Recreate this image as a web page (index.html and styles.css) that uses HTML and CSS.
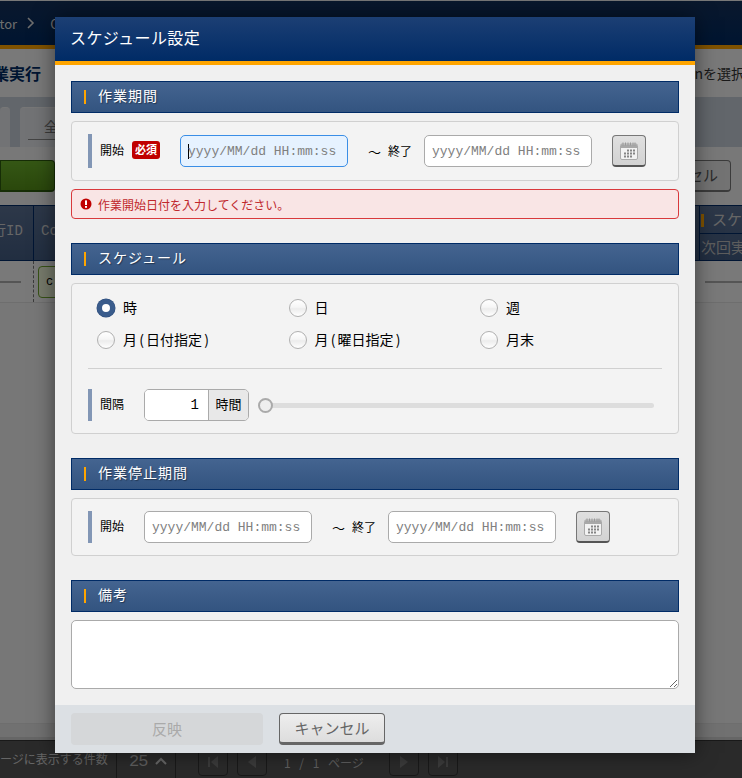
FILE: index.html
```html
<!DOCTYPE html>
<html lang="ja">
<head>
<meta charset="utf-8">
<title>スケジュール設定</title>
<link rel="stylesheet" href="styles.css">
</head>
<body>
<div class="page">
  <header class="top">
    <span class="crumb crumb-first">Conductor</span>
    <svg class="crumb-chev" width="8" height="12" viewBox="0 0 8 12"><path d="M1 1l5 5-5 5" fill="none" stroke="#ddd" stroke-width="1.6"/></svg>
    <span class="crumb">Conductor</span>
  </header>
  <div class="title-row">
    <h1 class="page-title">作業実行</h1>
    <p class="page-hint">Operationを選択</p>
  </div>
  <div class="tab-band">
    <div class="tab tab-a"></div>
    <div class="tab tab-b"><span class="tab-text">全</span></div>
  </div>
  <div class="action-row">
    <div class="btn-green"></div>
    <div class="btn-cancel-bg">キャンセル</div>
  </div>
  <div class="table-head">
    <div class="th th-id">実行ID</div>
    <div class="th th-name">Conductor</div>
    <div class="th-right">
      <div class="th-right-top">スケジュール</div>
      <div class="th-right-bottom">次回実行</div>
    </div>
  </div>
  <div class="table-row">
    <div class="td td-id"><span class="dash"></span></div>
    <div class="td td-name"><span class="chip">c</span></div>
    <div class="td-right"><span class="dash"></span></div>
  </div>
  <div class="page-fill"></div>
  <div class="page-strip"></div>
  <footer class="pager">
    <span class="pager-label">ージに表示する件数</span>
    <span class="pager-size">
      <span class="pager-count">25</span>
      <svg width="12" height="8" viewBox="0 0 12 8"><path d="M1 7l5-5 5 5" fill="none" stroke="#ccc" stroke-width="2"/></svg>
    </span>
    <span class="pager-btn pager-btn-first"><svg width="12" height="12" viewBox="0 0 12 12"><path d="M1 1h2v10H1zM11 0v12L4 6z" fill="#777"/></svg></span>
    <span class="pager-btn"><svg width="12" height="12" viewBox="0 0 12 12"><path d="M10 0v12L2 6z" fill="#777"/></svg></span>
    <span class="pager-pages">1 / 1 ページ</span>
    <span class="pager-btn"><svg width="12" height="12" viewBox="0 0 12 12"><path d="M2 0v12l8-6z" fill="#777"/></svg></span>
    <span class="pager-btn"><svg width="12" height="12" viewBox="0 0 12 12"><path d="M1 0v12l7-6zM9 1h2v10H9z" fill="#777"/></svg></span>
  </footer>
</div>
<div class="overlay"></div>
<section class="modal">
  <h2 class="modal-title">スケジュール設定</h2>
  <div class="modal-body">
    <div class="group">
      <h3 class="heading">作業期間</h3>
      <div class="panel panel-date">
        <div class="field-label field-label-wide"><span>開始</span><span class="badge">必須</span></div>
        <input class="date-input is-focus" type="text" placeholder="yyyy/MM/dd HH:mm:ss">
        <span class="tilde">～</span><span class="end-label">終了</span>
        <input class="date-input" type="text" placeholder="yyyy/MM/dd HH:mm:ss">
        <button class="cal-btn" type="button">
          <svg width="20" height="20" viewBox="0 0 20 20"><rect x="1.5" y="3" width="17" height="15.5" rx="1.5" fill="#f2f2f2" stroke="#aaa"/><rect x="2" y="3.5" width="16" height="3.5" fill="#a8a8a8"/><path d="M4 1.5v3M6.5 1.5v3M9 1.5v3M11.5 1.5v3M14 1.5v3M16 1.5v3" stroke="#999"/><path d="M8 8.5h2v2H8zM11 8.5h2v2h-2zM14 8.5h2v2h-2zM5 11.5h2v2H5zM8 11.5h2v2H8zM11 11.5h2v2h-2zM14 11.5h2v2h-2zM5 14.5h2v2H5zM8 14.5h2v2H8zM11 14.5h2v2h-2z" fill="#858585"/></svg>
        </button>
      </div>
      <div class="alert">
        <svg class="alert-icon" width="12" height="12" viewBox="0 0 12 12"><circle cx="6" cy="6" r="5.5" fill="#c00000"/><rect x="5" y="2.4" width="2" height="4.6" fill="#fff"/><rect x="5" y="8" width="2" height="1.8" fill="#fff"/></svg>
        <span>作業開始日付を入力してください。</span>
      </div>
    </div>

    <div class="group">
      <h3 class="heading">スケジュール</h3>
      <div class="panel panel-schedule">
        <div class="radios">
          <label class="radio-item"><span class="radio is-on"></span><span class="radio-text">時</span></label>
          <label class="radio-item"><span class="radio"></span><span class="radio-text">日</span></label>
          <label class="radio-item"><span class="radio"></span><span class="radio-text">週</span></label>
          <label class="radio-item"><span class="radio"></span><span class="radio-text">月<span class="paren">(</span>日付指定<span class="paren">)</span></span></label>
          <label class="radio-item"><span class="radio"></span><span class="radio-text">月<span class="paren">(</span>曜日指定<span class="paren">)</span></span></label>
          <label class="radio-item"><span class="radio"></span><span class="radio-text">月末</span></label>
        </div>
        <hr class="divider">
        <div class="interval">
          <div class="field-label"><span>間隔</span></div>
          <div class="number-group">
            <input class="number-input" type="text" value="1">
            <span class="number-unit">時間</span>
          </div>
          <div class="slider"><span class="slider-thumb"></span><span class="slider-track"></span></div>
        </div>
      </div>
    </div>

    <div class="group">
      <h3 class="heading">作業停止期間</h3>
      <div class="panel panel-stop">
        <div class="field-label"><span>開始</span></div>
        <input class="date-input" type="text" placeholder="yyyy/MM/dd HH:mm:ss">
        <span class="tilde">～</span><span class="end-label">終了</span>
        <input class="date-input" type="text" placeholder="yyyy/MM/dd HH:mm:ss">
        <button class="cal-btn" type="button">
          <svg width="20" height="20" viewBox="0 0 20 20"><rect x="1.5" y="3" width="17" height="15.5" rx="1.5" fill="#f2f2f2" stroke="#aaa"/><rect x="2" y="3.5" width="16" height="3.5" fill="#a8a8a8"/><path d="M4 1.5v3M6.5 1.5v3M9 1.5v3M11.5 1.5v3M14 1.5v3M16 1.5v3" stroke="#999"/><path d="M8 8.5h2v2H8zM11 8.5h2v2h-2zM14 8.5h2v2h-2zM5 11.5h2v2H5zM8 11.5h2v2H8zM11 11.5h2v2h-2zM14 11.5h2v2h-2zM5 14.5h2v2H5zM8 14.5h2v2H8zM11 14.5h2v2h-2z" fill="#858585"/></svg>
        </button>
      </div>
    </div>

    <div class="group">
      <h3 class="heading">備考</h3>
      <textarea class="note"></textarea>
    </div>
  </div>
  <div class="modal-foot">
    <button class="btn-apply" type="button" disabled>反映</button>
    <button class="btn-cancel" type="button">キャンセル</button>
  </div>
</section>
</body>
</html>
```

FILE: styles.css
```css
* { box-sizing: border-box; }
html, body { margin: 0; padding: 0; }
body {
  position: relative;
  width: 742px;
  height: 778px;
  overflow: hidden;
  font-family: "Noto Sans CJK JP", "Liberation Sans", sans-serif;
  color: #000;
  background: #eee;
}
h1, h2, h3, p { margin: 0; font-weight: normal; }

/* background page */
.page { display: flex; flex-direction: column; height: 778px; border-top: 1px solid #f0f0f0; overflow: hidden; }
.top {
  height: 48px;
  flex: none;
  display: flex;
  align-items: center;
  background: linear-gradient(#14305a, #002a62);
  border-bottom: 4px solid #ffa500;
  color: #ddd;
  font-size: 13px;
  white-space: nowrap;
}
.crumb-first { margin-left: -47px; }
.crumb-chev { margin: 0 15px 0 10px; flex: none; }
.title-row {
  height: 48px;
  flex: none;
  display: flex;
  align-items: center;
  justify-content: space-between;
  background: #f2f2f2;
  white-space: nowrap;
}
.page-title { margin-left: -23px; font-size: 16px; font-weight: 700; color: #002b62; }
.page-hint { font-size: 14px; color: #333; margin-right: -3px; }
.tab-band {
  height: 50px;
  flex: none;
  display: flex;
  align-items: flex-end;
  gap: 10px;
  padding-top: 10px;
  background: #c5ccd6;
}
.tab { height: 40px; background: #e4e6ea; border-radius: 4px 4px 0 0; border-top: 1px solid #eee; }
.tab-a { width: 10px; }
.tab-b { width: 120px; padding: 8px 0 0 24px; font-size: 14px; color: #777; }
.tab-text { display: block; width: 80px; height: 24px; border-bottom: 1px solid #888; margin-left: -16px; padding-left: 16px; }
.action-row {
  height: 58px;
  flex: none;
  display: flex;
  align-items: center;
  justify-content: space-between;
  background: #f0f0f0;
  padding-right: 11px;
}
.btn-green { width: 55px; height: 32px; background: linear-gradient(#6aae2a, #558f18); border: 1px solid #2c5a0c; border-bottom-width: 2px; border-radius: 0 4px 4px 0; }
.btn-cancel-bg {
  width: 110px; height: 32px; line-height: 28px; text-align: right; padding-right: 12px;
  border: 1px solid #777; border-bottom-width: 2px; border-radius: 4px;
  background: #e6e6e6; color: #555; font-size: 15px;
}
.table-head {
  height: 56px;
  flex: none;
  display: flex;
  background: linear-gradient(#5a7092, #435c82);
  border-top: 1px solid #002b66;
  border-bottom: 1px solid #002b66;
  color: #ccc;
  white-space: nowrap;
  overflow: hidden;
}
.th { font: 14px/50px "Liberation Mono", "Noto Sans CJK JP", monospace; border-right: 1px solid #002b66; overflow: hidden; }
.th-id { width: 34px; text-indent: -22px; }
.th-name { flex: 1; padding-left: 7px; }
.th-right { width: 42px; font-size: 15px; overflow: hidden; }
.th-right-top { position: relative; height: 28px; line-height: 25px; padding-left: 12px; border-bottom: 1px solid #002b66; white-space: nowrap; }
.th-right-top::before { content: ""; position: absolute; left: 1px; top: 8px; width: 3px; height: 13px; background: #ffa500; }
.th-right-bottom { line-height: 25px; padding-left: 1px; color: #bbb; }
.table-row {
  height: 42px;
  flex: none;
  display: flex;
  align-items: stretch;
  background: #f2f2f2;
  border-bottom: 1px solid #ddd;
}
.td { display: flex; align-items: center; }
.td-id { width: 34px; border-right: 1px dashed #777; }
.td-id .dash { width: 21px; }
.dash { display: block; height: 2px; background: #aaa; }
.td-name { flex: 1; padding-left: 4px; }
.chip {
  display: block; width: 40px; height: 32px; padding-left: 7px;
  font: 12px/30px "Liberation Mono", monospace;
  border: 1px solid #6ea52c; border-radius: 4px; background: #eef6d8;
}
.td-right { width: 37px; display: flex; align-items: center; }
.td-right .dash { width: 37px; }
.page-fill { flex: 1; background: #eee; }
.page-strip { height: 17px; flex: none; background: #e2e2e2; border-bottom: 3px solid #ccc; border-top: 1px solid #ddd; }
.pager {
  height: 38px;
  flex: none;
  display: flex;
  align-items: center;
  background: #555;
  border-top: 1px solid #333;
  color: #ddd;
  white-space: nowrap;
}
.pager-label { width: 117px; height: 100%; padding-top: 9px; line-height: 18px; font-size: 12px; border-right: 1px solid #333; color: #ccc; }
.pager-size { width: 59px; height: 100%; flex: none; display: flex; align-items: center; padding: 3px 0 0 12px; border-right: 1px solid #333; }
.pager-count { width: 26px; font: 17px "Liberation Mono", monospace; color: #bbb; letter-spacing: -1px; }
.pager-btn { width: 30px; height: 32px; margin-left: 9px; flex: none; display: flex; align-items: center; justify-content: center; padding-top: 5px; border: 1px solid #333; border-radius: 4px; }
.pager-btn-first { margin-left: 22px; }
.pager-pages { width: 113px; padding: 6px 0 0 17px; font-size: 12px; color: #bbb; word-spacing: 6px; }
.overlay { position: absolute; inset: 0; background: rgba(0, 0, 0, 0.5); }

/* modal */
.modal {
  position: absolute;
  left: 55px;
  top: 17px;
  width: 640px;
  height: 736px;
  display: flex;
  flex-direction: column;
  background: #f0f0f0;
  box-shadow: 0 0 20px rgba(0, 0, 0, 0.5);
}
.modal-title {
  height: 48px;
  flex: none;
  padding: 0 15px;
  line-height: 40px;
  font-size: 16px;
  letter-spacing: 0.4px;
  color: #fff;
  background: linear-gradient(#1c3f74, #002b66);
  border-bottom: 4px solid #ffa500;
}
.modal-body { flex: 1; display: flex; flex-direction: column; gap: 24px; padding: 16px; }
.group { display: flex; flex-direction: column; gap: 8px; }
.heading {
  height: 32px;
  flex: none;
  padding-left: 26px;
  line-height: 26px;
  font-size: 14px;
  letter-spacing: 1px;
  color: #fff;
  position: relative;
  text-shadow: 1px 1px 1px rgba(0, 0, 0, 0.4);
  background: linear-gradient(#446490, #335480);
  border: 1px solid #002b66;
}
.heading::before {
  content: "";
  position: absolute;
  left: 12px;
  top: 8px;
  width: 2px;
  height: 14px;
  background: #ffa500;
}
.panel { background: #f3f3f3; border: 1px solid #d0d0d0; border-radius: 4px; }
.panel-date, .panel-stop { display: flex; align-items: center; padding: 12px 16px; }
.panel-date { height: 60px; }
.panel-stop { height: 58px; }
.field-label {
  width: 56px;
  height: 32px;
  flex: none;
  display: flex;
  align-items: center;
  gap: 8px;
  padding: 0 0 3px 8px;
  font-size: 12px;
  border-left: 4px solid #8296b5;
}
.field-label-wide { width: 92px; height: 34px; }
.badge {
  width: 28px;
  height: 18px;
  line-height: 17px;
  text-align: center;
  border-radius: 3px;
  background: #c00000;
  color: #fff;
  font-size: 11px;
  font-weight: 700;
}
.date-input {
  width: 168px;
  height: 32px;
  flex: none;
  padding: 0 7px;
  font: 13px "Liberation Mono", monospace;
  background: #fff;
  border: 1px solid #aaa;
  border-radius: 5px;
  outline: none;
}
.date-input::placeholder { color: #808080; opacity: 1; }
.is-focus {
  background: linear-gradient(#000, #000) 7px center / 1px 15px no-repeat, #e6f2ff;
  border-color: #3a8ee6;
}
.tilde { margin-left: 20px; width: 13px; font-size: 13px; line-height: 1; }
.end-label { margin: 0 12px 2px 7px; font-size: 12px; }
.cal-btn {
  width: 34px;
  height: 32px;
  flex: none;
  margin-left: 20px;
  padding: 0;
  display: flex;
  align-items: center;
  justify-content: center;
  background: linear-gradient(#e0e0e0, #d2d2d2);
  border: 1px solid #777;
  border-bottom: 2px solid #555;
  border-radius: 4px;
}
.alert {
  height: 30px;
  display: flex;
  align-items: center;
  gap: 6px;
  padding-left: 8px;
  background: #f9e5e5;
  border: 1px solid #d9393c;
  border-radius: 4px;
  color: #c0282c;
  font-size: 12px;
}
.alert-icon { flex: none; }
.panel-schedule { height: 151px; padding: 15px 16px 12px; }
.radios { display: grid; grid-template-columns: repeat(3, 191.5px); row-gap: 14px; padding-left: 9px; }
.radio-item { display: flex; align-items: center; height: 18px; gap: 8px; font-size: 14px; line-height: 18px; white-space: nowrap; }
.radio-text { margin-top: -2px; }
.paren { display: inline-block; width: 9px; text-align: center; }
.radio {
  width: 18px;
  height: 18px;
  flex: none;
  border-radius: 50%;
  border: 1.5px solid #b0b0b0;
  background: linear-gradient(#fff, #f6f6f6 45%, #ececec 55%, #fff);
}
.radio.is-on {
  border: 5px solid #3a5c8c;
  background: #fff;
  box-shadow: 0 0 0 0.5px #2c4c7c;
}
.divider { height: 1px; margin: 19px 0 20px; border: 0; background: #d0d0d0; }
.interval { display: flex; align-items: center; height: 32px; }
.number-group { width: 105px; height: 32px; flex: none; display: flex; border: 1px solid #aaa; border-radius: 5px; overflow: hidden; }
.number-input { width: 63px; height: 30px; padding: 0 9px; border: 0; outline: 0; text-align: right; background: #fff; font: 14px "Liberation Mono", monospace; }
.number-unit { flex: 1; line-height: 28px; text-align: center; background: #e8e8e8; border-left: 1px solid #aaa; font-size: 13px; }
.slider { flex: 1; display: flex; align-items: center; margin: 0 8px 0 9px; }
.slider-thumb { width: 15px; height: 15px; flex: none; margin-right: -7px; position: relative; border: 2.5px solid #aaa; border-radius: 50%; background: #eee; }
.slider-track { flex: 1; height: 5px; border-radius: 3px; background: #ddd; }
.note { width: 608px; height: 69px; display: block; background: #fff; border: 1px solid #aaa; border-radius: 5px; outline: none; resize: both; }
.modal-foot {
  height: 48px;
  flex: none;
  display: flex;
  gap: 16px;
  padding: 8px 16px;
  background: #dce0e4;
}
.btn-apply, .btn-cancel { height: 32px; padding: 0 0 2px; font: 15px "Noto Sans CJK JP", sans-serif; border-radius: 4px; }
.btn-apply { width: 192px; background: #d5d7d9; border: 0; color: #aaa; }
.btn-cancel {
  width: 106px;
  color: #666;
  background: linear-gradient(#eee, #ddd);
  border: 1px solid #666;
  border-bottom: 3px solid #666;
}
```
